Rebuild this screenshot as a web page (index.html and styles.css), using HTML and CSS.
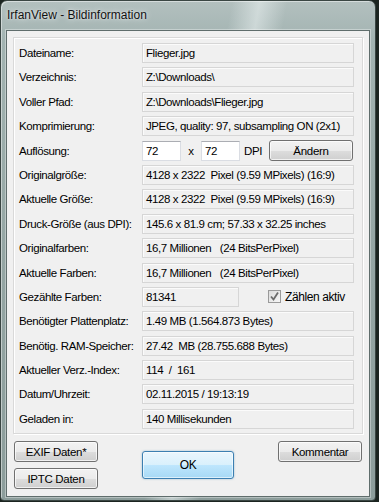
FILE: index.html
```html
<!DOCTYPE html>
<html lang="de">
<head>
  <meta charset="UTF-8">
  <meta name="viewport" content="width=device-width, initial-scale=1.0">
  <title>IrfanView - Bildinformation</title>
  <link rel="stylesheet" href="styles.css">
</head>
<body>
  <div class="window">
    <!-- Title bar -->
    <div class="titlebar">IrfanView - Bildinformation</div>

    <div class="client">
      <!-- Info panel -->
      <div class="panel">
        <div class="label">Dateiname:</div>
        <div class="field">Flieger.jpg</div>

        <div class="label">Verzeichnis:</div>
        <div class="field">Z:\Downloads\</div>

        <div class="label">Voller Pfad:</div>
        <div class="field">Z:\Downloads\Flieger.jpg</div>

        <div class="label">Komprimierung:</div>
        <div class="field">JPEG, quality: 97, subsampling ON (2x1)</div>

        <div class="label">Auflösung:</div>
        <div class="dpi">
          <span class="input">72</span>
          <span class="times">x</span>
          <span class="input">72</span>
          <span class="unit">DPI</span>
          <button class="btn btn-change">Ändern</button>
        </div>

        <div class="label">Originalgröße:</div>
        <div class="field">4128 x 2322&nbsp; Pixel (9.59 MPixels) (16:9)</div>

        <div class="label">Aktuelle Größe:</div>
        <div class="field">4128 x 2322&nbsp; Pixel (9.59 MPixels) (16:9)</div>

        <div class="label">Druck-Größe (aus DPI):</div>
        <div class="field">145.6 x 81.9 cm; 57.33 x 32.25 inches</div>

        <div class="label">Originalfarben:</div>
        <div class="field">16,7 Millionen &nbsp; (24 BitsPerPixel)</div>

        <div class="label">Aktuelle Farben:</div>
        <div class="field">16,7 Millionen &nbsp; (24 BitsPerPixel)</div>

        <div class="label">Gezählte Farben:</div>
        <div class="counted">
          <span class="field field-short">81341</span>
          <span class="checkbox">
            <svg width="11" height="11" viewBox="0 0 11 11"><path d="M2 5.5 L4.5 8.5 L9 1.5" fill="none" stroke="#6b6b6b" stroke-width="1.8"/></svg>
          </span>
          <span class="check-label">Zählen aktiv</span>
        </div>

        <div class="label">Benötigter Plattenplatz:</div>
        <div class="field">1.49 MB (1.564.873 Bytes)</div>

        <div class="label">Benötig. RAM-Speicher:</div>
        <div class="field">27.42&nbsp; MB (28.755.688 Bytes)</div>

        <div class="label">Aktueller Verz.-Index:</div>
        <div class="field">114&nbsp; /&nbsp; 161</div>

        <div class="label">Datum/Uhrzeit:</div>
        <div class="field">02.11.2015 / 19:13:19</div>

        <div class="label">Geladen in:</div>
        <div class="field">140 Millisekunden</div>
      </div>

      <!-- Dialog buttons -->
      <div class="actions">
        <button class="btn btn-exif">EXIF Daten*</button>
        <button class="btn btn-ok">OK</button>
        <button class="btn btn-comment">Kommentar</button>
        <button class="btn btn-iptc">IPTC Daten</button>
      </div>
    </div>
  </div>
</body>
</html>
```

FILE: styles.css
```css
body {
  margin: 0;
  width: 379px;
  height: 502px;
  overflow: hidden;
  background: #1b2420;
  font-family: "Liberation Sans", Arial, sans-serif;
}

/* Aero glass frame */
.window {
  box-sizing: border-box;
  width: 376px;
  height: 501px;
  border: 1px solid #3a4643;
  border-radius: 7px 7px 4px 4px;
  background:
    linear-gradient(100deg, rgba(255,255,255,0) 50%, rgba(235,242,242,0.55) 56%, rgba(255,255,255,0) 62%),
    linear-gradient(to bottom, #b3c0bf 0%, #a2b3b1 8%, #95a6a4 50%, #8c9d9b 100%);
  box-shadow: inset 1px 1px 0 rgba(255,255,255,0.45);
  display: flex;
  flex-direction: column;
}

.titlebar {
  height: 29px;
  line-height: 29px;
  padding-left: 6px;
  font-size: 12px;
  color: #111;
  text-shadow: 0 0 6px rgba(255,255,255,0.8), 0 0 2px rgba(255,255,255,0.6);
}

.client {
  box-sizing: border-box;
  width: 364px;
  height: 467px;
  margin: 0 0 3px 5px;
  border: 1px solid #5f6d6c;
  background: #f0f0f0;
  padding: 6px;
  box-shadow: 0 0 0 1px rgba(255,255,255,0.35);
}

/* Info rows */
.panel {
  box-sizing: border-box;
  width: 350px;
  height: 397px;
  border: 1px solid #d9d9d9;
  box-shadow: inset 1px 1px 0 #fff, 1px 1px 0 #fff;
  padding: 5px 8px 0 5px;
  display: grid;
  grid-template-columns: 123px 1fr;
  grid-auto-rows: 20px;
  row-gap: 4.4px;
  font-size: 11.5px;
  letter-spacing: -0.4px;
  color: #000;
}

.label {
  display: flex;
  align-items: center;
  white-space: nowrap;
}

.field {
  box-sizing: border-box;
  display: flex;
  align-items: center;
  height: 20px;
  padding-left: 3px;
  border: 1px solid #d6d6d6;
  box-shadow: inset 1px 1px 0 #fbfbfb;
  background: #f0f0f0;
  white-space: nowrap;
  overflow: hidden;
}

.dpi,
.counted {
  display: flex;
  align-items: center;
}

.input {
  box-sizing: border-box;
  width: 39px;
  height: 20px;
  display: flex;
  align-items: center;
  padding-left: 3px;
  background: #fff;
  border: 1px solid #dadde3;
  border-top-color: #abadb3;
}

.times {
  width: 20px;
  text-align: center;
}

.unit {
  margin-left: 4px;
  width: 20px;
}

.field-short {
  width: 97px;
}

.checkbox {
  box-sizing: border-box;
  width: 13px;
  height: 13px;
  margin-left: 29px;
  border: 1px solid #9a9a9a;
  background: linear-gradient(135deg, #dcdcdc, #f6f6f6);
  display: flex;
  align-items: center;
  justify-content: center;
}

.check-label {
  margin-left: 4px;
  font-size: 12px;
}

/* Buttons */
.btn {
  box-sizing: border-box;
  height: 21px;
  padding: 0;
  border: 1px solid #707070;
  border-radius: 3px;
  background: linear-gradient(to bottom, #f2f2f2 0%, #ebebeb 50%, #dddddd 51%, #cfcfcf 100%);
  box-shadow: inset 0 0 0 1px rgba(255,255,255,0.7);
  font-family: "Liberation Sans", Arial, sans-serif;
  font-size: 11.5px;
  letter-spacing: -0.3px;
  color: #000;
}

.btn-change {
  width: 84px;
  margin-left: 5px;
}

.actions {
  display: grid;
  grid-template-columns: 84px 92px 84px;
  grid-template-rows: 21px 21px;
  column-gap: 44px;
  row-gap: 6px;
  margin: 7px 0 0 1px;
}

.btn-exif { grid-column: 1; grid-row: 1; }
.btn-iptc { grid-column: 1; grid-row: 2; }
.btn-comment { grid-column: 3; grid-row: 1; }

.btn-ok {
  grid-column: 2;
  grid-row: 1 / 3;
  align-self: center;
  height: 28px;
  font-size: 12px;
  border-color: #3c7fb1;
  background: linear-gradient(to bottom, #eaf6fd 0%, #d9f0fc 50%, #bee6fd 51%, #a7d9f5 100%);
  box-shadow: inset 0 0 0 1px rgba(255,255,255,0.6), 0 0 2px rgba(60,127,177,0.5);
}
```
